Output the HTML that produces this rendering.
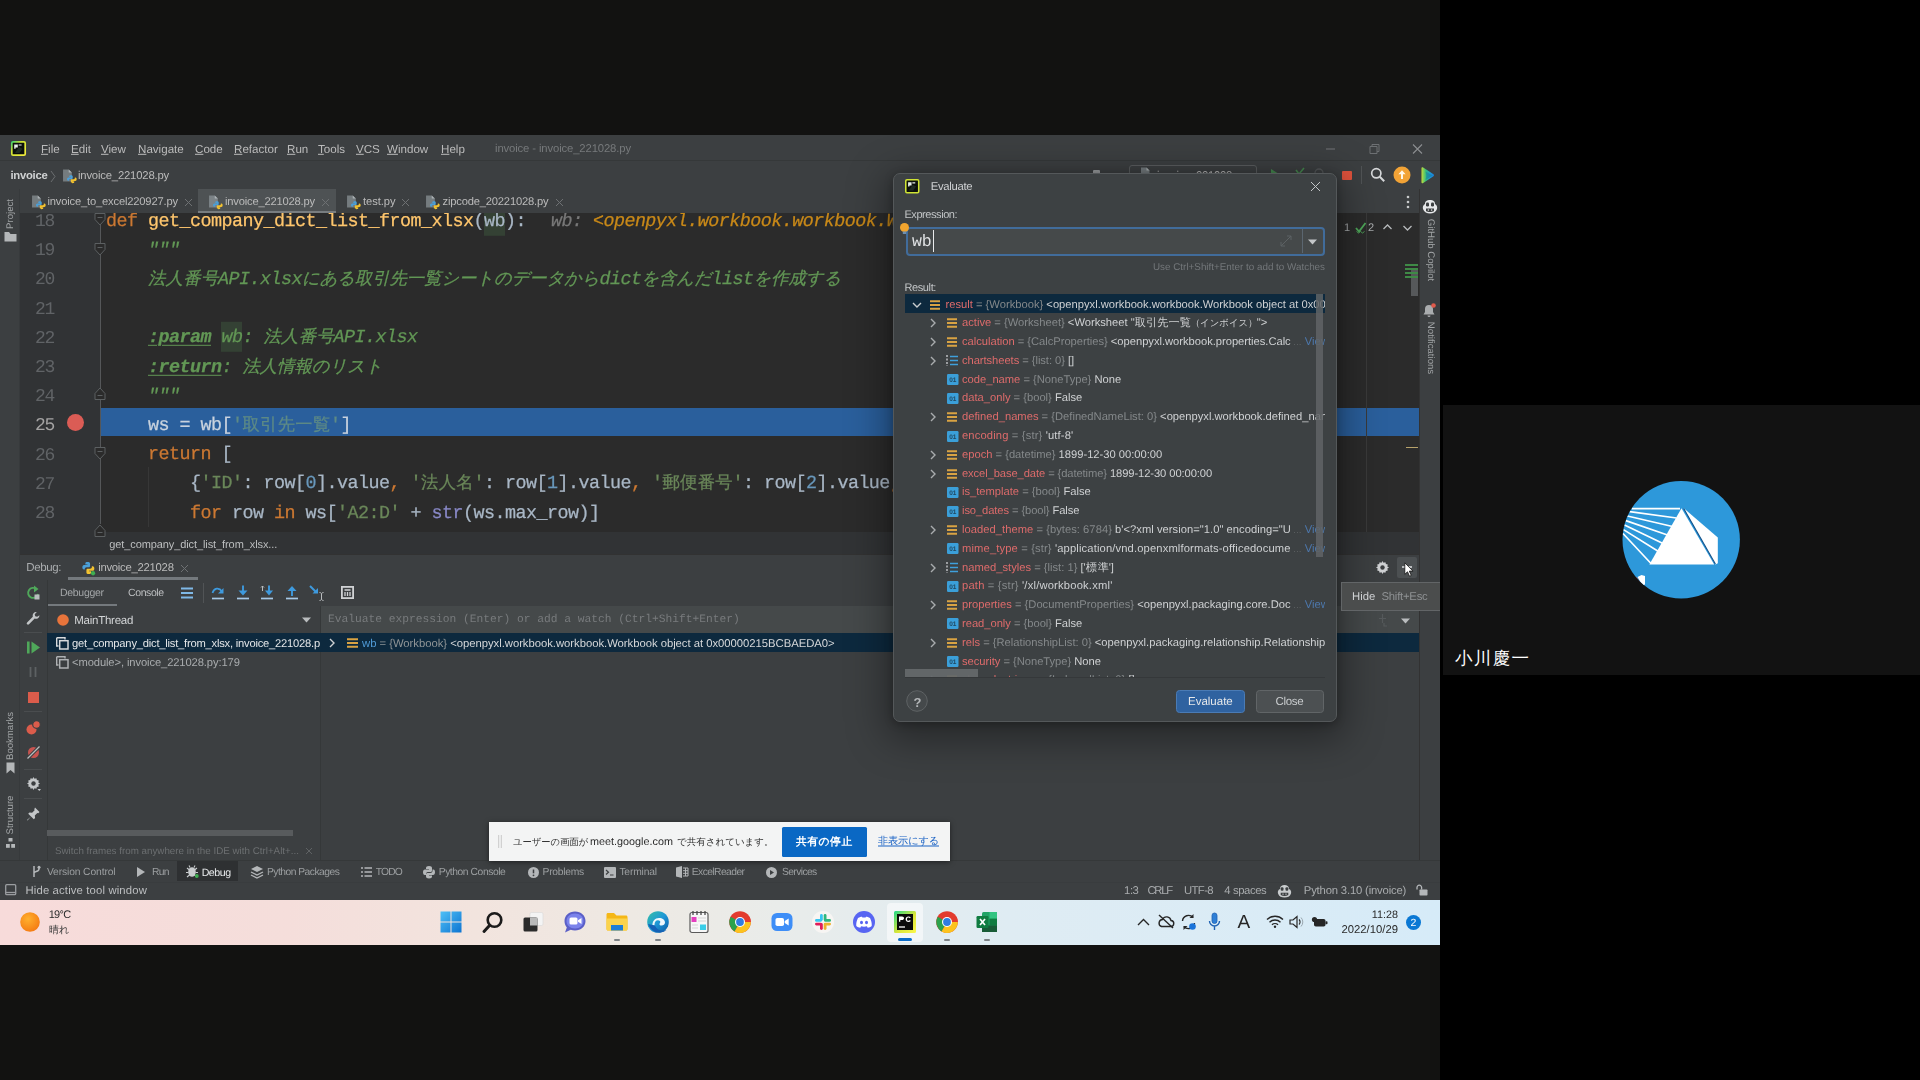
<!DOCTYPE html>
<html lang="ja">
<head>
<meta charset="utf-8">
<title>Meet screen share - PyCharm Evaluate</title>
<style>
*{box-sizing:border-box;margin:0;padding:0}
html,body{width:1920px;height:1080px;overflow:hidden;background:#000}
body{position:relative;font-family:"Liberation Sans",sans-serif;font-size:11.5px;color:#bbbbbb;-webkit-font-smoothing:antialiased;text-rendering:geometricPrecision}
.a{position:absolute;white-space:nowrap}
.t{position:absolute;white-space:nowrap;line-height:1;transform:translateY(calc(-50% + .6px))}
.mono{font-family:"Liberation Mono",monospace}
svg{position:absolute;overflow:visible}
#share{left:0;top:135px;width:1440px;height:810px;background:#3c3f41;overflow:hidden;filter:blur(.4px)}
/* IDE chrome */
#menubar{left:0;top:0;width:1440px;height:26px;background:#3c3f41;border-bottom:1px solid #353839}
#navbar{left:0;top:27px;width:1440px;height:27px;background:#3c3f41}
#tabs{left:20px;top:54px;width:1399px;height:24px;background:#3c3f41}
#lstripe{left:0;top:54px;width:20px;height:674px;background:#3c3f41;border-right:1px solid #373a3c}
#rstripe{left:1419px;top:54px;width:21px;height:674px;background:#3c3f41;border-left:1px solid #323232}
#editor{left:20px;top:78px;width:1399px;height:319px;background:#2b2b2b;overflow:hidden}
#gutter{left:0;top:0;width:80px;height:319px;background:#313335}
.ln{position:absolute;left:15px;width:20px;font-family:"Liberation Mono",monospace;font-size:18px;line-height:1;color:#606366;transform:translateY(-50%);letter-spacing:-1.3px}
.cl{position:absolute;left:86px;font-family:"Liberation Mono",monospace;font-size:18.4px;letter-spacing:-.54px;line-height:1;white-space:pre;color:#a9b7c6;transform:translateY(-50%);-webkit-text-stroke:.25px}
.cl .cj{font-size:17.3px;letter-spacing:-.2px}
.kw{color:#cc7832}.fn{color:#ffc66d}.st{color:#6a8759}.doc{color:#629755;font-style:italic}.num{color:#6897bb}.bi{color:#8888c6}
.cj{display:inline-block;white-space:nowrap;letter-spacing:-.2px;text-align:justify;text-align-last:justify}
.hl{background:#344134;padding:5px 0 4px}
.hint{font-style:italic;color:#787878}.hv{color:#c98918}
.tag{font-weight:bold;text-decoration:underline;text-decoration-thickness:1px;text-underline-offset:3px}
#crumbs{left:20px;top:397px;width:1399px;height:22px;background:#313335}
#dbghead{left:20px;top:419px;width:1399px;height:26px;background:#3c3f41;border-top:1px solid #323232}
#dbgbody{left:20px;top:445px;width:1399px;height:281px;background:#3c3f41}
#toolbar-b{left:0;top:725px;width:1440px;height:22px;background:#3c3f41;border-top:1px solid #353839}
#status{left:0;top:747px;width:1440px;height:18px;background:#3c3f41;border-top:1px solid #393c3e}
#taskbar{left:0;top:765px;width:1440px;height:45px;background:linear-gradient(90deg,#f7dbda 0%,#f5dedb 20%,#f2e4de 33%,#eee9e3 44%,#e9ecea 54%,#dfecf3 70%,#d6ebf8 100%)}
/* tile */
#tile{left:1443px;top:405px;width:477px;height:270px;background:#121212}
</style>
</head>
<body>
<div class="a" style="left:0;top:0;width:1440px;height:1080px;background:#121211"></div>
<div id="share" class="a">
  <div id="menubar" class="a"></div>
  <div id="navbar" class="a"></div>
  <div id="tabs" class="a"></div>
  <div id="lstripe" class="a"></div>
  <div id="rstripe" class="a"></div>
  <div id="editor" class="a">
    <div id="gutter" class="a"></div>
    <div class="a" style="left:80px;top:195px;width:1319px;height:28px;background:#2a5f9c"></div>
    <div class="ln" style="top:8.9px;color:#606366">18</div>
    <div class="ln" style="top:38.1px;color:#606366">19</div>
    <div class="ln" style="top:67.3px;color:#606366">20</div>
    <div class="ln" style="top:96.5px;color:#606366">21</div>
    <div class="ln" style="top:125.7px;color:#606366">22</div>
    <div class="ln" style="top:154.9px;color:#606366">23</div>
    <div class="ln" style="top:184.1px;color:#606366">24</div>
    <div class="ln" style="top:213.3px;color:#a4a3a3">25</div>
    <div class="ln" style="top:242.5px;color:#606366">26</div>
    <div class="ln" style="top:271.7px;color:#606366">27</div>
    <div class="ln" style="top:300.9px;color:#606366">28</div>
    <div class="a" style="left:47px;top:201px;width:17px;height:17px;border-radius:50%;background:#db5c55"></div>
    <div class="a" style="left:1346px;top:0;width:1px;height:319px;background:#3a3a3a"></div>
    <div class="cl" style="top:8.5px"><span class="kw">def </span><span class="fn">get_company_dict_list_from_xlsx</span>(<span class="hl">wb</span>):  <span class="hint" style="margin-left:4px">wb: <span class="hv">&lt;openpyxl.workbook.workbook.Workbook object at 0x</span></span></div>
    <div class="cl" style="top:37.7px">    <span class="doc">"""</span></div>
    <div class="cl" style="top:66.9px">    <span class="doc"><span class="cj" style="width:70px">法人番号</span>API.xlsx<span class="cj" style="width:297.5px">にある取引先一覧シートのデータから</span>dict<span class="cj" style="width:70px">を含んだ</span>list<span class="cj" style="width:87.5px">を作成する</span></span></div>
    <div class="cl" style="top:125.3px">    <span class="doc"><span class="tag">:param</span> <span class="hl">wb</span>: <span class="cj" style="width:70px">法人番号</span>API.xlsx</span></div>
    <div class="cl" style="top:154.5px">    <span class="doc"><span class="tag">:return</span>: <span class="cj" style="width:140px">法人情報のリスト</span></span></div>
    <div class="cl" style="top:183.7px">    <span class="doc">"""</span></div>
    <div class="cl" style="top:212.9px">    <span style="color:#c9d3de">ws = wb[</span><span style="color:#5d8a86">'<span class="cj" style="width:87.5px">取引先一覧</span>'</span><span style="color:#c9d3de">]</span></div>
    <div class="cl" style="top:242.1px">    <span class="kw">return </span>[</div>
    <div class="cl" style="top:271.3px">        {<span class="st">'ID'</span>: row[<span class="num">0</span>].value<span class="kw">,</span> <span class="st">'<span class="cj" style="width:52.5px">法人名</span>'</span>: row[<span class="num">1</span>].value<span class="kw">,</span> <span class="st">'<span class="cj" style="width:70px">郵便番号</span>'</span>: row[<span class="num">2</span>].value<span class="kw">,</span> <span class="st">'<span class="cj" style="width:35px">住所</span>'</span>: row[<span class="num">3</span>].value}</div>
    <div class="cl" style="top:300.5px">        <span class="kw">for </span>row <span class="kw">in </span>ws[<span class="st">'A2:D'</span> + <span class="bi">str</span>(ws.max_row)]</div>
    <div class="cl" style="top:329.7px">    ]</div>
    <!--EDITOR2-->
  </div>
  <div id="crumbs" class="a"></div>
  <div id="dbghead" class="a"></div>
  <div id="dbgbody" class="a"></div>
  <div id="toolbar-b" class="a"></div>
  <div id="status" class="a"></div>
  <div id="taskbar" class="a"></div>
  <svg style="left:11px;top:6px;" width="15" height="15" viewBox="0 0 15 15"><defs><linearGradient id="pcb" x1="0" y1="0" x2="1" y2="1"><stop offset="0" stop-color="#3fd56f"/><stop offset=".35" stop-color="#cfe334"/><stop offset="1" stop-color="#f3ec3c"/></linearGradient></defs><rect x=".8" y=".8" width="13.4" height="13.4" rx="1.2" fill="#0b0f0c" stroke="url(#pcb)" stroke-width="1.700"/><path d="M3.2 3.4h3.6v3.2H4.6v1.2H3.2z M7.6 3.4h3v1.2h-3z" fill="#e9f0ea"/><path d="M8 6l3.5 1.8L8.500 12H4z" fill="#1f2a22"/></svg>
<div class="t" style="left:41px;top:13.5px;color:#bbbbbb;font-size:11.6px;"><u>F</u>ile</div>
<div class="t" style="left:71px;top:13.5px;color:#bbbbbb;font-size:11.6px;"><u>E</u>dit</div>
<div class="t" style="left:101px;top:13.5px;color:#bbbbbb;font-size:11.6px;"><u>V</u>iew</div>
<div class="t" style="left:138px;top:13.5px;color:#bbbbbb;font-size:11.6px;"><u>N</u>avigate</div>
<div class="t" style="left:195px;top:13.5px;color:#bbbbbb;font-size:11.6px;"><u>C</u>ode</div>
<div class="t" style="left:234px;top:13.5px;color:#bbbbbb;font-size:11.6px;"><u>R</u>efactor</div>
<div class="t" style="left:287px;top:13.5px;color:#bbbbbb;font-size:11.6px;"><u>R</u>un</div>
<div class="t" style="left:318px;top:13.5px;color:#bbbbbb;font-size:11.6px;"><u>T</u>ools</div>
<div class="t" style="left:356px;top:13.5px;color:#bbbbbb;font-size:11.6px;"><u>V</u>CS</div>
<div class="t" style="left:387px;top:13.5px;color:#bbbbbb;font-size:11.6px;"><u>W</u>indow</div>
<div class="t" style="left:441px;top:13.5px;color:#bbbbbb;font-size:11.6px;"><u>H</u>elp</div>
<div class="t" style="left:495px;top:13.5px;color:#76797b;font-size:11.3px;letter-spacing:-0.128px;">invoice - invoice_221028.py</div>
<svg style="left:1324px;top:7px;" width="100" height="14" viewBox="0 0 100 14"><path d="M2 7h9" stroke="#6d7073" stroke-width="1.1"/><path d="M46 4.500h7v7h-7z M48 4.500v-2h7v7h-2" fill="none" stroke="#6d7073" stroke-width="1"/><path d="M89 2.500l9 9m0-9l-9 9" stroke="#8b8e90" stroke-width="1.1"/></svg>
<div class="t" style="left:10.5px;top:41.3px;color:#d0d2d3;font-size:11.3px;font-weight:bold;letter-spacing:-0.277px;">invoice</div>
<svg style="left:50px;top:35px;" width="6" height="13" viewBox="0 0 6 13"><path d="M1 1l4 5.500-4 5.500" fill="none" stroke="#6b6e70" stroke-width="1"/></svg>
<svg style="left:62px;top:33.5px;" width="14.5" height="16.053571428571427" viewBox="0 0 14 15.500"><path d="M1 .5h5.500l3 3V12H1z" fill="#9aa1a6" opacity=".62"/><path d="M6.500 .5v3h3z" fill="#c5cacd" opacity=".7"/><g transform="translate(3.200 4.600) scale(.76)"><path d="M5 3.200c0-1 .8-1.400 2.200-1.400s2.200.500 2.200 1.400v2.300c0 .8-.6 1.200-1.300 1.200H6.200c-1 0-1.700.700-1.700 1.600v.600H3.700c-1 0-1.500-.900-1.500-2.100s.600-2.200 1.600-2.200H7v-.500H5z" fill="#4a9fd8"/><path d="M11.400 10.600c0 1-.8 1.500-2.200 1.500S7 11.600 7 10.600V8.300c0-.8.600-1.200 1.300-1.200h2.100c1 0 1.700-.700 1.700-1.600v-.700h.8c1 0 1.500.900 1.500 2.100s-.6 2.200-1.600 2.200H9.400v.500h2z" fill="#f2c230"/></g></svg>
<div class="t" style="left:78px;top:41.3px;color:#bbbbbb;font-size:11.3px;letter-spacing:-0.191px;">invoice_221028.py</div>
<div class="a" style="left:1129px;top:30px;width:128px;height:20px;background:transparent;border:1px solid #5a5d5f;border-radius:3px;"></div>
<div class="a" style="left:1093px;top:35px;width:7px;height:6px;background:#9a9da0;border-radius:1px;"></div>
<svg style="left:1140px;top:32px;" width="14" height="15.5" viewBox="0 0 14 15.500"><path d="M1 .5h5.500l3 3V12H1z" fill="#9aa1a6" opacity=".62"/><path d="M6.500 .5v3h3z" fill="#c5cacd" opacity=".7"/><g transform="translate(3.200 4.600) scale(.76)"><path d="M5 3.200c0-1 .8-1.400 2.200-1.400s2.200.500 2.200 1.400v2.300c0 .8-.6 1.200-1.300 1.200H6.200c-1 0-1.700.700-1.700 1.600v.600H3.700c-1 0-1.500-.900-1.500-2.100s.600-2.200 1.600-2.200H7v-.500H5z" fill="#4a9fd8"/><path d="M11.400 10.600c0 1-.8 1.500-2.200 1.500S7 11.600 7 10.600V8.300c0-.8.600-1.200 1.300-1.200h2.100c1 0 1.700-.700 1.700-1.600v-.700h.8c1 0 1.500.900 1.500 2.100s-.6 2.200-1.600 2.200H9.400v.500h2z" fill="#f2c230"/></g></svg>
<div class="t" style="left:1157px;top:40.5px;color:#bbbbbb;font-size:11.3px;letter-spacing:-0.298px;">invoice_221028</div>
<svg style="left:1268px;top:32px;opacity:.8;" width="60" height="10" viewBox="0 0 60 10"><path d="M3 2l8 5-8 5z" fill="#499c54"/><path d="M28 3l3 4 5-6" stroke="#499c54" stroke-width="1.600" fill="none"/><circle cx="51" cy="6" r="4" fill="none" stroke="#5b5e60" stroke-width="1.300"/></svg>
<div class="a" style="left:1341.8px;top:35.5px;width:10.2px;height:9.8px;background:#e0533d;border-radius:1px;"></div>
<div class="a" style="left:1361px;top:31px;width:1px;height:18px;background:#515456;"></div>
<svg style="left:1370px;top:32px;" width="16" height="16" viewBox="0 0 16 16"><circle cx="6.300" cy="6.300" r="4.600" fill="none" stroke="#d6d8da" stroke-width="1.700"/><path d="M9.800 9.800l4.400 4.400" stroke="#d6d8da" stroke-width="2"/></svg>
<svg style="left:1393px;top:31px;" width="18" height="18" viewBox="0 0 18 18"><circle cx="9" cy="9" r="8.500" fill="#f2a336"/><path d="M9 4.200l3.600 4H10v4.800H8V8.200H5.400z" fill="#fff7e8"/></svg>
<svg style="left:1419px;top:31.5px;" width="16" height="17" viewBox="0 0 16 17"><defs><linearGradient id="tg" x1="0" y1="0" x2="1" y2="0"><stop offset="0" stop-color="#c3dc3a"/><stop offset=".35" stop-color="#35bf7c"/><stop offset=".75" stop-color="#1b93dd"/><stop offset="1" stop-color="#1c7fd6"/></linearGradient></defs><path d="M2.500 1.200c0-.9.900-1.300 1.700-.8l10.300 6.900c.7.500.7 1.400 0 1.900L4.200 16.100c-.8.500-1.700.100-1.700-.8z" fill="url(#tg)"/><path d="M6.500 4.500l7 4-7 4.500c1-3 1-5.500 0-8.500z" fill="#157a9e" opacity=".55"/></svg>
<div class="a" style="left:198px;top:54px;width:138px;height:24px;background:#4e5254;"></div>
<div class="a" style="left:198px;top:75.5px;width:138px;height:2.5px;background:#787d80;"></div>
<svg style="left:31px;top:59.5px;" width="14.5" height="16.053571428571427" viewBox="0 0 14 15.500"><path d="M1 .5h5.500l3 3V12H1z" fill="#9aa1a6" opacity=".62"/><path d="M6.500 .5v3h3z" fill="#c5cacd" opacity=".7"/><g transform="translate(3.200 4.600) scale(.76)"><path d="M5 3.200c0-1 .8-1.400 2.200-1.400s2.200.500 2.200 1.400v2.300c0 .8-.6 1.200-1.300 1.200H6.200c-1 0-1.700.700-1.700 1.600v.600H3.700c-1 0-1.500-.900-1.500-2.100s.600-2.200 1.600-2.200H7v-.500H5z" fill="#4a9fd8"/><path d="M11.400 10.600c0 1-.8 1.500-2.200 1.500S7 11.600 7 10.600V8.300c0-.8.600-1.200 1.300-1.200h2.100c1 0 1.700-.700 1.700-1.600v-.700h.8c1 0 1.500.900 1.500 2.100s-.6 2.200-1.600 2.200H9.400v.500h2z" fill="#f2c230"/></g></svg>
<div class="t" style="left:47.5px;top:67.4px;color:#bbbbbb;font-size:11.2px;letter-spacing:-0.185px;">invoice_to_excel220927.py</div>
<svg style="left:184.5px;top:63.8px;" width="7" height="7" viewBox="0 0 7 7"><path d="M0 0l7 7M7 0l-7 7" stroke="#6e7173" stroke-width="1"/></svg>
<svg style="left:208px;top:59.5px;" width="14.5" height="16.053571428571427" viewBox="0 0 14 15.500"><path d="M1 .5h5.500l3 3V12H1z" fill="#9aa1a6" opacity=".62"/><path d="M6.500 .5v3h3z" fill="#c5cacd" opacity=".7"/><g transform="translate(3.200 4.600) scale(.76)"><path d="M5 3.200c0-1 .8-1.400 2.200-1.400s2.200.500 2.200 1.400v2.300c0 .8-.6 1.200-1.300 1.200H6.200c-1 0-1.700.700-1.700 1.600v.600H3.700c-1 0-1.500-.900-1.500-2.100s.600-2.200 1.600-2.200H7v-.500H5z" fill="#4a9fd8"/><path d="M11.400 10.600c0 1-.8 1.500-2.200 1.500S7 11.600 7 10.600V8.300c0-.8.600-1.200 1.300-1.200h2.100c1 0 1.700-.700 1.700-1.600v-.700h.8c1 0 1.500.900 1.500 2.100s-.6 2.200-1.600 2.200H9.400v.500h2z" fill="#f2c230"/></g></svg>
<div class="t" style="left:225px;top:67.4px;color:#bbbbbb;font-size:11.2px;letter-spacing:-0.201px;">invoice_221028.py</div>
<svg style="left:322.0px;top:63.8px;" width="7" height="7" viewBox="0 0 7 7"><path d="M0 0l7 7M7 0l-7 7" stroke="#6e7173" stroke-width="1"/></svg>
<svg style="left:346px;top:59.5px;" width="14.5" height="16.053571428571427" viewBox="0 0 14 15.500"><path d="M1 .5h5.500l3 3V12H1z" fill="#9aa1a6" opacity=".62"/><path d="M6.500 .5v3h3z" fill="#c5cacd" opacity=".7"/><g transform="translate(3.200 4.600) scale(.76)"><path d="M5 3.200c0-1 .8-1.400 2.200-1.400s2.200.500 2.200 1.400v2.300c0 .8-.6 1.200-1.300 1.200H6.200c-1 0-1.700.700-1.700 1.600v.600H3.700c-1 0-1.500-.900-1.500-2.100s.600-2.200 1.600-2.200H7v-.500H5z" fill="#4a9fd8"/><path d="M11.400 10.600c0 1-.8 1.500-2.200 1.500S7 11.600 7 10.600V8.300c0-.8.600-1.200 1.300-1.200h2.100c1 0 1.700-.700 1.700-1.600v-.700h.8c1 0 1.500.900 1.500 2.100s-.6 2.200-1.600 2.200H9.400v.500h2z" fill="#f2c230"/></g></svg>
<div class="t" style="left:363px;top:67.4px;color:#bbbbbb;font-size:11.2px;letter-spacing:-0.070px;">test.py</div>
<svg style="left:402.0px;top:63.8px;" width="7" height="7" viewBox="0 0 7 7"><path d="M0 0l7 7M7 0l-7 7" stroke="#6e7173" stroke-width="1"/></svg>
<svg style="left:425px;top:59.5px;" width="14.5" height="16.053571428571427" viewBox="0 0 14 15.500"><path d="M1 .5h5.500l3 3V12H1z" fill="#9aa1a6" opacity=".62"/><path d="M6.500 .5v3h3z" fill="#c5cacd" opacity=".7"/><g transform="translate(3.200 4.600) scale(.76)"><path d="M5 3.200c0-1 .8-1.400 2.200-1.400s2.200.500 2.200 1.400v2.300c0 .8-.6 1.200-1.300 1.200H6.200c-1 0-1.700.700-1.700 1.600v.600H3.700c-1 0-1.500-.900-1.500-2.100s.600-2.200 1.600-2.200H7v-.500H5z" fill="#4a9fd8"/><path d="M11.400 10.600c0 1-.8 1.500-2.200 1.500S7 11.600 7 10.600V8.300c0-.8.600-1.200 1.300-1.200h2.100c1 0 1.700-.700 1.700-1.600v-.700h.8c1 0 1.500.900 1.500 2.100s-.6 2.200-1.600 2.200H9.400v.500h2z" fill="#f2c230"/></g></svg>
<div class="t" style="left:442.5px;top:67.4px;color:#bbbbbb;font-size:11.2px;letter-spacing:-0.190px;">zipcode_20221028.py</div>
<svg style="left:556.0px;top:63.8px;" width="7" height="7" viewBox="0 0 7 7"><path d="M0 0l7 7M7 0l-7 7" stroke="#6e7173" stroke-width="1"/></svg>
<svg style="left:1406px;top:60px;" width="4" height="14" viewBox="0 0 4 14"><circle cx="2" cy="2" r="1.300" fill="#c8cacc"/><circle cx="2" cy="7" r="1.300" fill="#c8cacc"/><circle cx="2" cy="12" r="1.300" fill="#c8cacc"/></svg>
<div class="a" style="left:10.5px;top:78.5px;width:0;height:0"><div style="position:absolute;white-space:nowrap;line-height:1;font-size:9.6px;color:#a2a5a7;transform:translate(-50%,-50%) rotate(-90deg)">Project</div></div>
<svg style="left:4px;top:96px;" width="13" height="11" viewBox="0 0 13 11"><path d="M.5 1h4.500l1.500 2h6v7.500H.5z" fill="#b4b7b9"/></svg>
<div class="a" style="left:10.5px;top:601px;width:0;height:0"><div style="position:absolute;white-space:nowrap;line-height:1;font-size:9.6px;color:#a2a5a7;transform:translate(-50%,-50%) rotate(-90deg)">Bookmarks</div></div>
<svg style="left:6px;top:627px;" width="9" height="12" viewBox="0 0 9 12"><path d="M.5.5h8v11l-4-3.500-4 3.500z" fill="#b4b7b9"/></svg>
<div class="a" style="left:10.5px;top:680px;width:0;height:0"><div style="position:absolute;white-space:nowrap;line-height:1;font-size:9.6px;color:#a2a5a7;transform:translate(-50%,-50%) rotate(-90deg)">Structure</div></div>
<svg style="left:6px;top:703px;" width="9" height="10" viewBox="0 0 9 10"><rect x="2.500" y="0" width="4" height="3.500" fill="#b4b7b9"/><rect x="0" y="6" width="3.800" height="3.800" fill="#b4b7b9"/><rect x="5.200" y="6" width="3.800" height="3.800" fill="#b4b7b9"/></svg>
<svg style="left:1421.5px;top:64px;" width="16" height="15" viewBox="0 0 16 15"><path d="M3 5c0-3 2-4 5-4s5 1 5 4c2 1 2.500 3 2 5-1 3-4 4.500-7 4.500S2 13 1 10c-.5-2 0-4 2-5z" fill="#e6e8ea"/><rect x="4" y="3.500" width="3" height="4" rx="1.200" fill="#3c3f41"/><rect x="9" y="3.500" width="3" height="4" rx="1.200" fill="#3c3f41"/><path d="M4 9.500h8v2.500c-2 1.300-6 1.300-8 0z" fill="#3c3f41"/><path d="M6.300 10.300v1.500M9.700 10.300v1.500" stroke="#e6e8ea" stroke-width="1"/></svg>
<div class="a" style="left:1429.5px;top:115px;width:0;height:0"><div style="position:absolute;white-space:nowrap;line-height:1;font-size:9.6px;color:#a2a5a7;transform:translate(-50%,-50%) rotate(90deg)">GitHub Copilot</div></div>
<svg style="left:1423px;top:168px;" width="13" height="14" viewBox="0 0 13 14"><path d="M6 2a4 4 0 0 1 4 4v3l1.500 2.500h-11L2 9V6a4 4 0 0 1 4-4z M4.500 12.500h3a1.500 1.500 0 0 1-3 0z" fill="#a9acae"/><circle cx="10.500" cy="2.500" r="2.300" fill="#e05a4b"/></svg>
<div class="a" style="left:1429.5px;top:213px;width:0;height:0"><div style="position:absolute;white-space:nowrap;line-height:1;font-size:9.6px;color:#a2a5a7;transform:translate(-50%,-50%) rotate(90deg)">Notifications</div></div>
<div class="a" style="left:99.5px;top:89px;width:1px;height:300px;background:#555759;"></div>
<svg style="left:94px;top:78px;" width="12" height="13" viewBox="0 0 12 13"><path d="M1 .5h10v6L6 12 1 6.500z" fill="#2b2b2b" stroke="#5c6062" stroke-width="1"/><path d="M3.500 4.500h5" stroke="#5c6062" stroke-width="1"/></svg>
<svg style="left:94px;top:107.5px;" width="12" height="13" viewBox="0 0 12 13"><path d="M1 .5h10v6L6 12 1 6.500z" fill="#2b2b2b" stroke="#5c6062" stroke-width="1"/><path d="M3.500 4.500h5" stroke="#5c6062" stroke-width="1"/></svg>
<svg style="left:94px;top:251.5px;" width="12" height="13" viewBox="0 0 12 13"><path d="M1 12.500h10v-6L6 1 1 6.500z" fill="#2b2b2b" stroke="#5c6062" stroke-width="1"/><path d="M3.500 8.500h5" stroke="#5c6062" stroke-width="1"/></svg>
<svg style="left:94px;top:311.5px;" width="12" height="13" viewBox="0 0 12 13"><path d="M1 .5h10v6L6 12 1 6.500z" fill="#2b2b2b" stroke="#5c6062" stroke-width="1"/><path d="M3.500 4.500h5" stroke="#5c6062" stroke-width="1"/></svg>
<svg style="left:94px;top:389px;" width="12" height="13" viewBox="0 0 12 13"><path d="M1 12.500h10v-6L6 1 1 6.500z" fill="#2b2b2b" stroke="#5c6062" stroke-width="1"/><path d="M3.500 8.500h5" stroke="#5c6062" stroke-width="1"/></svg>
<div class="a" style="left:148px;top:332px;width:1px;height:60px;background:#373737;"></div>
<div class="t" style="left:1344px;top:92.5px;color:#a7aaac;font-size:11px;">1</div>
<svg style="left:1354px;top:86px;" width="14" height="13" viewBox="0 0 14 13"><path d="M2 7l3 3.500 6.500-8.500" stroke="#4fa85a" stroke-width="1.800" fill="none"/><path d="M2.500 10.500l2 1.500 2-1.500 2 1.500 2-1.500" stroke="#4fa85a" stroke-width=".9" fill="none"/></svg>
<div class="t" style="left:1368px;top:92.5px;color:#a7aaac;font-size:11px;">2</div>
<svg style="left:1383px;top:89px;" width="9" height="6" viewBox="0 0 9 6"><path d="M.5 5l4-4 4 4" stroke="#b8bbbd" stroke-width="1.300" fill="none"/></svg>
<svg style="left:1403px;top:90px;" width="9" height="6" viewBox="0 0 9 6"><path d="M.5 1l4 4 4-4" stroke="#b8bbbd" stroke-width="1.300" fill="none"/></svg>
<div class="a" style="left:1411px;top:133px;width:7px;height:28px;background:#5b5d5f;opacity:.9;"></div>
<div class="a" style="left:1405px;top:129px;width:13px;height:1.5px;background:#3f8a46;"></div>
<div class="a" style="left:1405px;top:133px;width:13px;height:1.5px;background:#3f8a46;"></div>
<div class="a" style="left:1405px;top:137px;width:13px;height:1.5px;background:#3f8a46;"></div>
<div class="a" style="left:1405px;top:141px;width:13px;height:1.5px;background:#3f8a46;"></div>
<div class="a" style="left:1406px;top:311.5px;width:12px;height:1.5px;background:#b7a26b;"></div>
<div class="t" style="left:109.2px;top:409.8px;color:#bdbfc0;font-size:11px;letter-spacing:-0.094px;">get_company_dict_list_from_xlsx...</div>
<div class="t" style="left:26.2px;top:433.4px;color:#a9acae;font-size:11.5px;letter-spacing:-0.347px;">Debug:</div>
<svg style="left:79.5px;top:425.3px;" width="15.5" height="15.5" viewBox="0 0 14.500 14.500"><path d="M5 3.200c0-1 .8-1.400 2.200-1.400s2.200.500 2.200 1.400v2.300c0 .8-.6 1.200-1.300 1.200H6.200c-1 0-1.700.700-1.700 1.600v.600H3.700c-1 0-1.500-.900-1.500-2.100s.600-2.200 1.600-2.200H7v-.500H5z" fill="#4a9fd8"/><path d="M10.400 11.600c0 1-.8 1.500-2.200 1.500S6 12.600 6 11.600V9.300c0-.8.600-1.200 1.300-1.200h2.100c1 0 1.700-.700 1.700-1.600v-.700h.8c1 0 1.500.900 1.500 2.100s-.6 2.200-1.600 2.200H8.400v.500h2z" fill="#f2c230"/><circle cx="12.200" cy="12.400" r="2" fill="#3fae52"/></svg>
<div class="t" style="left:98.2px;top:433.4px;color:#bbbbbb;font-size:11.3px;letter-spacing:-0.262px;">invoice_221028</div>
<svg style="left:180.5px;top:429.8px;" width="7" height="7" viewBox="0 0 7 7"><path d="M0 0l7 7M7 0l-7 7" stroke="#6e7173" stroke-width="1"/></svg>
<div class="a" style="left:68px;top:442px;width:130px;height:2.5px;background:#74797d;"></div>
<svg style="left:1376px;top:426px;" width="13" height="13" viewBox="0 0 13 13"><path d="M6.500 0l1 1.700 1.900-.500.500 1.900 1.900.500-.500 1.900 1.700 1-1.700 1 .5 1.900-1.900.500-.500 1.900-1.900-.500-1 1.700-1-1.700-1.900.500-.500-1.900-1.900-.500.500-1.900L0 6.500l1.700-1-.500-1.900 1.900-.500.500-1.900 1.900.500z" fill="#cfd1d3"/><circle cx="6.500" cy="6.500" r="2.200" fill="#3c3f41"/></svg>
<div class="a" style="left:1397px;top:422px;width:20px;height:21px;background:#4c5052;border-radius:2px;"></div>
<div class="a" style="left:1402px;top:431px;width:10px;height:1.8px;background:#b9bcbe;"></div>
<svg style="left:1404px;top:427px;" width="10" height="16" viewBox="0 0 10 16"><path d="M.8.800v11.500l2.700-2.500 2 4.400 1.800-.800-2-4.300h3.700z" fill="#fff" stroke="#111" stroke-width=".8"/></svg>
<svg style="left:26px;top:450px;" width="14" height="15" viewBox="0 0 14 15"><path d="M10.500 4.200A5 5 0 1 0 12 9" fill="none" stroke="#4fa85a" stroke-width="1.900"/><path d="M8 .5l4.500 3.500L8 7.500z" fill="#4fa85a"/><rect x="8.500" y="9.500" width="5" height="5" fill="#b9bcbe"/></svg>
<div class="t" style="left:60px;top:458.4px;color:#a4a7a9;font-size:10.5px;letter-spacing:-0.296px;">Debugger</div>
<div class="t" style="left:128px;top:458.4px;color:#bdbfc1;font-size:10.5px;letter-spacing:-0.396px;">Console</div>
<div class="a" style="left:48px;top:468.5px;width:69px;height:2.5px;background:#74797d;"></div>
<svg style="left:181px;top:451.5px;" width="12" height="12" viewBox="0 0 12 12"><path d="M0 1.500h12M0 6h12M0 10.500h12" stroke="#7fb8e6" stroke-width="2"/></svg>
<div class="a" style="left:203px;top:448px;width:1px;height:20px;background:#515456;"></div>
<svg style="left:210.5px;top:450px;" width="14" height="15" viewBox="0 0 14 15"><path d="M1.500 8C3 3 8 2 11 6.500" fill="none" stroke="#3e9ade" stroke-width="1.700"/><path d="M12.500 3v5.500H7z" fill="#3e9ade"/><path d="M1 13.500h12" stroke="#a7c8e6" stroke-width="1.700"/></svg>
<svg style="left:235.5px;top:450px;" width="14" height="15" viewBox="0 0 14 15"><path d="M7 .5v6" stroke="#3e9ade" stroke-width="1.900"/><path d="M2.500 5.500h9L7 10.500z" fill="#3e9ade"/><path d="M1 13.500h12" stroke="#a7c8e6" stroke-width="1.700"/></svg>
<svg style="left:259.5px;top:450px;" width="14" height="15" viewBox="0 0 14 15"><path d="M9 .5v6" stroke="#3e9ade" stroke-width="1.900"/><path d="M5 5.500h8L9 10.500z" fill="#3e9ade"/><path d="M1 13.500h12" stroke="#a7c8e6" stroke-width="1.700"/><path d="M2.500 1v5M1 2.500L2.500 1 4 2.500" stroke="#b9bcbe" stroke-width="1" fill="none"/></svg>
<svg style="left:284.5px;top:450px;" width="14" height="15" viewBox="0 0 14 15"><path d="M7 5v6" stroke="#3e9ade" stroke-width="1.900"/><path d="M2.500 6h9L7 1z" fill="#3e9ade"/><path d="M1 13.500h12" stroke="#a7c8e6" stroke-width="1.700"/></svg>
<svg style="left:308.5px;top:450px;" width="17" height="16" viewBox="0 0 17 16"><path d="M1 1l6 6" stroke="#3e9ade" stroke-width="1.900"/><path d="M3.500 8.500H9V3z" fill="#3e9ade"/><path d="M10.500 7.500c1 0 1.500.500 2 1 .5-.500 1-1 2-1M10.500 15.500c1 0 1.500-.500 2-1 .5.500 1 1 2 1M12.500 8.500v6" stroke="#b9bcbe" stroke-width="1" fill="none"/></svg>
<svg style="left:341px;top:451px;" width="13" height="13" viewBox="0 0 13 13"><rect x=".9" y=".9" width="11.200" height="11.200" fill="none" stroke="#d0d2d4" stroke-width="1.800"/><path d="M3.500 4h6M4 6v4M6.500 6v4M9 6v4" stroke="#d0d2d4" stroke-width="1.300"/></svg>
<div class="a" style="left:46.5px;top:445px;width:1px;height:280px;background:#353839;"></div>
<svg style="left:26px;top:476px;" width="15" height="15" viewBox="0 0 15 15"><path d="M13.500 4.200a3.600 3.600 0 0 1-4.800 3.400L3 13.300a1.300 1.300 0 0 1-1.900-1.900l5.700-5.700A3.600 3.600 0 0 1 10.800 1L8.700 3.200l.5 2 2 .5z" fill="#c3c6c8"/></svg>
<div class="a" style="left:24px;top:497px;width:18px;height:1px;background:#4a4d4f;"></div>
<svg style="left:27px;top:506px;" width="14" height="13" viewBox="0 0 14 13"><rect x="0" y=".5" width="2.600" height="12" fill="#4fa85a"/><path d="M4.500.5l8.500 6-8.500 6z" fill="#4fa85a"/></svg>
<svg style="left:29px;top:532px;" width="8" height="10" viewBox="0 0 8 10"><path d="M1.500 0v10M6.500 0v10" stroke="#5d6163" stroke-width="1.800"/></svg>
<div class="a" style="left:27.5px;top:556.5px;width:11px;height:11px;background:#db5c4b;"></div>
<div class="a" style="left:24px;top:576px;width:18px;height:1px;background:#4a4d4f;"></div>
<svg style="left:26px;top:585px;" width="15" height="15" viewBox="0 0 15 15"><circle cx="5.500" cy="9.500" r="5" fill="#db5c4b"/><circle cx="10.500" cy="4.500" r="3.800" fill="#db5c4b" stroke="#3c3f41" stroke-width="1.200"/></svg>
<svg style="left:26px;top:610px;" width="15" height="15" viewBox="0 0 15 15"><circle cx="7.500" cy="7.500" r="5.500" fill="#c75450"/><path d="M1 14L14 1" stroke="#3c3f41" stroke-width="3.200"/><path d="M1.500 13.500L13.500 1.500" stroke="#b9bcbe" stroke-width="1.300"/></svg>
<div class="a" style="left:24px;top:634px;width:18px;height:1px;background:#4a4d4f;"></div>
<svg style="left:27px;top:642px;" width="14" height="14" viewBox="0 0 14 14"><path d="M6.500 0l1 1.700 1.900-.500.500 1.900 1.900.500-.500 1.900 1.700 1-1.700 1 .5 1.900-1.900.500-.500 1.900-1.900-.500-1 1.700-1-1.700-1.900.500-.500-1.900-1.900-.500.500-1.900L0 6.500l1.700-1-.500-1.900 1.900-.500.500-1.900 1.900.500z" fill="#c3c6c8"/><circle cx="6.500" cy="6.500" r="2.200" fill="#3c3f41"/><path d="M10.500 12h3.500l-1.700 2z" fill="#c3c6c8"/></svg>
<div class="a" style="left:24px;top:663px;width:18px;height:1px;background:#4a4d4f;"></div>
<svg style="left:27px;top:672px;" width="13" height="14" viewBox="0 0 13 14"><path d="M8 .5l4.500 4.500-1.200 1.200-1-.3-2.500 2.500.3 2.600-1.300 1.300L4 9.500.5 13.500 0 13l4-3.500L1.200 6.700l1.300-1.300 2.600.3 2.500-2.500-.3-1z" fill="#c3c6c8"/></svg>
<svg style="left:56.5px;top:479.3px;" width="12" height="12" viewBox="0 0 12 12"><circle cx="6" cy="6" r="5.800" fill="#e8743b"/></svg>
<div class="t" style="left:74.2px;top:485.6px;color:#d2d4d6;font-size:11.5px;letter-spacing:-0.237px;">MainThread</div>
<svg style="left:302px;top:482px;" width="9" height="6" viewBox="0 0 9 6"><path d="M0 .5h9L4.500 5.500z" fill="#b9bcbe"/></svg>
<div class="a" style="left:321px;top:471px;width:1098px;height:26.5px;background:#45494a;"></div>
<div class="t mono" style="left:328px;top:485.3px;color:#787b7d;font-size:11.25px;">Evaluate expression (Enter) or add a watch (Ctrl+Shift+Enter)</div>
<svg style="left:1377px;top:479px;" width="11" height="12" viewBox="0 0 11 12"><path d="M5.500 0v9M2 4.500h7M7 9v3h3" stroke="#565a5c" stroke-width="1.200" fill="none"/></svg>
<svg style="left:1401px;top:482.5px;" width="9" height="6" viewBox="0 0 9 6"><path d="M0 .5h9L4.500 5.500z" fill="#b9bcbe"/></svg>
<div class="a" style="left:320px;top:471px;width:1px;height:254px;background:#353839;"></div>
<div class="a" style="left:47px;top:498px;width:1372px;height:19px;background:#0d293e;"></div>
<svg style="left:56px;top:501.5px;" width="13" height="13" viewBox="0 0 13 13"><path d="M.7.700h8.300v1.800M.7.700v8.300h1.800" fill="none" stroke="#d8dadc" stroke-width="1.400"/><rect x="3.700" y="3.700" width="8.300" height="8.300" fill="none" stroke="#d8dadc" stroke-width="1.500"/></svg>
<div class="t" style="left:72px;top:508.5px;width:248px;overflow:hidden;color:#e4e6e8;font-size:11.200px;letter-spacing:-.22px">get_company_dict_list_from_xlsx, invoice_221028.py:25</div>
<svg style="left:56px;top:520.5px;" width="13" height="13" viewBox="0 0 13 13"><path d="M.7.700h8.300v1.800M.7.700v8.300h1.800" fill="none" stroke="#aeb1b3" stroke-width="1.400"/><rect x="3.700" y="3.700" width="8.300" height="8.300" fill="none" stroke="#aeb1b3" stroke-width="1.500"/></svg>
<div class="t" style="left:72px;top:527.5px;color:#a9acae;font-size:11.2px;letter-spacing:-0.105px;">&lt;module&gt;, invoice_221028.py:179</div>
<svg style="left:328.5px;top:503px;" width="6" height="10" viewBox="0 0 6 10"><path d="M1 1l4 4-4 4" fill="none" stroke="#cfd1d3" stroke-width="1.400"/></svg>
<svg style="left:346.5px;top:503px;" width="11" height="10" viewBox="0 0 11 10"><path d="M0 1.200h11M0 5h11M0 8.800h11" stroke="#d9a343" stroke-width="2"/></svg>
<div class="t" style="left:362px;top:508.5px;color:#d5d7d9;font-size:11.3px;letter-spacing:-0.033px;"><span style="color:#4f9ad6">wb</span><span style="color:#8f9496"> = {Workbook} </span>&lt;openpyxl.workbook.workbook.Workbook object at 0x00000215BCBAEDA0&gt;</div>
<div class="a" style="left:47px;top:695px;width:246px;height:6px;background:#585b5d;border-radius:0;"></div>
<div class="t" style="left:55px;top:715.5px;color:#6c6f71;font-size:9.8px;">Switch frames from anywhere in the IDE with Ctrl+Alt+...</div>
<svg style="left:306.0px;top:712.5px;" width="6" height="6" viewBox="0 0 6 6"><path d="M0 0l6 6M6 0l-6 6" stroke="#5f6264" stroke-width="1"/></svg>
<div class="a" style="left:177px;top:726px;width:61px;height:20px;background:#2e3032;"></div>
<svg style="left:32px;top:730px;" width="9" height="13" viewBox="0 0 9 13"><path d="M2 1v11M2 8c0-2 5-1 5-4V3" fill="none" stroke="#b4b7b9" stroke-width="1.500"/><circle cx="7" cy="2.200" r="1.500" fill="#b4b7b9"/></svg>
<div class="t" style="left:46.9px;top:738.1px;color:#9c9fa1;font-size:10.3px;letter-spacing:-0.122px;">Version Control</div>
<svg style="left:137px;top:732px;" width="8" height="10" viewBox="0 0 8 10"><path d="M0 0l8 5-8 5z" fill="#b4b7b9"/></svg>
<div class="t" style="left:151.9px;top:738.1px;color:#9c9fa1;font-size:10.3px;letter-spacing:-0.699px;">Run</div>
<svg style="left:186px;top:730px;" width="13" height="13" viewBox="0 0 13 13"><ellipse cx="6" cy="7" rx="3.800" ry="4.800" fill="#c9ccce"/><path d="M1 3l2.500 2M11 3L8.500 5M0 7.500h2.500M9.500 7.500H12M1 12l2.500-2M11 12L8.500 10M4 2.500L3 .5M8 2.500L9 .5" stroke="#c9ccce" stroke-width="1.100"/><circle cx="10.800" cy="11" r="1.900" fill="#3fae52"/></svg>
<div class="t" style="left:201.7px;top:738.1px;color:#e8eaec;font-size:10.6px;letter-spacing:-0.467px;">Debug</div>
<svg style="left:251px;top:730.5px;" width="12" height="13" viewBox="0 0 12 13"><path d="M6 0l6 3-6 3-6-3z" fill="#b4b7b9"/><path d="M0 6l6 3 6-3M0 9l6 3 6-3" fill="none" stroke="#b4b7b9" stroke-width="1.300"/></svg>
<div class="t" style="left:267px;top:738.1px;color:#9c9fa1;font-size:10.3px;letter-spacing:-0.524px;">Python Packages</div>
<svg style="left:361px;top:732px;" width="11" height="10" viewBox="0 0 11 10"><path d="M0 1h2M3.500 1H11M0 5h2M3.500 5H11M0 9h2M3.500 9H11" stroke="#b4b7b9" stroke-width="1.600"/></svg>
<div class="t" style="left:375.7px;top:738.1px;color:#9c9fa1;font-size:10.3px;letter-spacing:-0.817px;">TODO</div>
<svg style="left:422.5px;top:731px;" width="12" height="12" viewBox="0 0 12 12"><path d="M6 0c2 0 3 .7 3 2v2.500c0 1-.8 1.500-1.800 1.500H4.800C3.500 6 3 7 3 8v1H1.800C.6 9 0 7.800 0 6.300S.7 3.500 2 3.500h4V3H3V2c0-1.300 1-2 3-2z M9.500 3.500h.8c1.200 0 1.700 1.200 1.700 2.700s-.7 2.800-2 2.800H6v.5h3v1c0 1.300-1 2-3 2s-3-.7-3-2V8.500c0-1 .8-1.500 1.800-1.500h2.400C8.500 7 9.500 6 9.500 5z" fill="#b4b7b9"/></svg>
<div class="t" style="left:438.7px;top:738.1px;color:#9c9fa1;font-size:10.3px;letter-spacing:-0.430px;">Python Console</div>
<svg style="left:527.5px;top:731.5px;" width="11" height="11" viewBox="0 0 11 11"><circle cx="5.500" cy="5.500" r="5.500" fill="#b4b7b9"/><path d="M5.500 2.500v3.800" stroke="#3c3f41" stroke-width="1.500"/><circle cx="5.500" cy="8.300" r=".9" fill="#3c3f41"/></svg>
<div class="t" style="left:542.6px;top:738.1px;color:#9c9fa1;font-size:10.3px;letter-spacing:-0.288px;">Problems</div>
<svg style="left:604px;top:731.5px;" width="12" height="11" viewBox="0 0 12 11"><rect x="0" y="0" width="12" height="11" rx="1" fill="#b4b7b9"/><path d="M2 3l2.500 2.200L2 7.500M6 8h3.500" stroke="#3c3f41" stroke-width="1.200" fill="none"/></svg>
<div class="t" style="left:619.4px;top:738.1px;color:#9c9fa1;font-size:10.3px;letter-spacing:-0.165px;">Terminal</div>
<svg style="left:676px;top:731px;" width="12" height="12" viewBox="0 0 12 12"><path d="M0 1.500l6-1.500v12l-6-1.500z" fill="#b4b7b9"/><path d="M7 2h5v8H7M7 4.700h5M7 7.300h5M9.500 2v8" fill="none" stroke="#b4b7b9" stroke-width="1"/></svg>
<div class="t" style="left:691.8px;top:738.1px;color:#9c9fa1;font-size:10.3px;letter-spacing:-0.579px;">ExcelReader</div>
<svg style="left:765.5px;top:731.5px;" width="11" height="11" viewBox="0 0 11 11"><circle cx="5.500" cy="5.500" r="5.500" fill="#b4b7b9"/><path d="M4 3l4 2.500-4 2.500z" fill="#3c3f41"/></svg>
<div class="t" style="left:781.9px;top:738.1px;color:#9c9fa1;font-size:10.3px;letter-spacing:-0.587px;">Services</div>
<svg style="left:5px;top:749px;" width="12" height="12" viewBox="0 0 12 12"><rect x=".7" y=".7" width="10" height="10" rx="1" fill="none" stroke="#9a9da0" stroke-width="1.300"/><path d="M.7 8.500h10" stroke="#9a9da0" stroke-width="1.300"/></svg>
<div class="t" style="left:25.5px;top:756.2px;color:#bdbfc1;font-size:11.3px;letter-spacing:0.149px;">Hide active tool window</div>
<div class="t" style="left:1124px;top:756.2px;color:#a9acae;font-size:11.3px;letter-spacing:-0.403px;">1:3</div>
<div class="t" style="left:1147.4px;top:756.2px;color:#a9acae;font-size:11.3px;letter-spacing:-1.277px;">CRLF</div>
<div class="t" style="left:1184px;top:756.2px;color:#a9acae;font-size:11.3px;letter-spacing:-0.603px;">UTF-8</div>
<div class="t" style="left:1224.3px;top:756.2px;color:#a9acae;font-size:11.3px;letter-spacing:-0.404px;">4 spaces</div>
<div class="t" style="left:1303.8px;top:756.2px;color:#a9acae;font-size:11.3px;letter-spacing:-0.179px;">Python 3.10 (invoice)</div>
<svg style="left:1277px;top:748.5px;" width="15" height="14" viewBox="0 0 15 14"><path d="M3 5c0-3 2-4 4.500-4S12 2 12 5c2 1 2.500 2.500 2 4.500-1 3-3.500 4-6.500 4S2 12.500 1 9.500C.5 7.500 1 6 3 5z" fill="#c9ccce"/><rect x="3.700" y="3.200" width="2.800" height="3.600" rx="1.100" fill="#3c3f41"/><rect x="8.500" y="3.200" width="2.800" height="3.600" rx="1.100" fill="#3c3f41"/><path d="M3.700 8.800h7.600v2.300c-2 1.200-5.600 1.200-7.600 0z" fill="#3c3f41"/><path d="M6 9.500v1.400M9 9.500v1.400" stroke="#c9ccce" stroke-width="1"/></svg>
<svg style="left:1416px;top:749px;" width="12" height="12" viewBox="0 0 12 12"><rect x="3.500" y="5.500" width="8" height="6" rx=".8" fill="#b4b7b9"/><path d="M1 5.500V3.500a2.300 2.300 0 0 1 4.600 0v2" fill="none" stroke="#b4b7b9" stroke-width="1.300"/></svg>
<svg style="left:20px;top:777px;" width="20" height="20" viewBox="0 0 20 20"><defs><radialGradient id="sun" cx=".4" cy=".35" r=".7"><stop offset="0" stop-color="#ffb02e"/><stop offset="1" stop-color="#f47a12"/></radialGradient></defs><circle cx="10" cy="10" r="9.800" fill="url(#sun)"/></svg>
<div class="t" style="left:48.7px;top:780px;color:#2b2b2b;font-size:11px;letter-spacing:-0.695px;">19°C</div>
<div class="t" style="left:49px;top:795px;color:#3a3a3a;font-size:10px;">晴れ</div>
<svg style="left:439.0px;top:775.0px;" width="24" height="24" viewBox="0 0 24 24"><defs><linearGradient id="wg" x1="0" y1="0" x2="1" y2="1"><stop offset="0" stop-color="#4fc0f7"/><stop offset="1" stop-color="#0d74d1"/></linearGradient></defs><path d="M1.500 1.500h10v10h-10zM12.500 1.500h10v10h-10zM1.500 12.500h10v10h-10zM12.500 12.500h10v10h-10z" fill="url(#wg)"/></svg>
<svg style="left:481.0px;top:775.0px;" width="24" height="24" viewBox="0 0 24 24"><circle cx="13.500" cy="10" r="6.800" fill="none" stroke="#1b1b1b" stroke-width="2.600"/><path d="M8.500 15.500L3 21.500" stroke="#1b1b1b" stroke-width="3" stroke-linecap="round"/></svg>
<svg style="left:520.5px;top:775.0px;" width="24" height="24" viewBox="0 0 24 24"><rect x="9" y="2.500" width="13" height="13" rx="1.500" fill="#f4f4f4" stroke="#d9d9d9" stroke-width=".6"/><rect x="2.500" y="7.500" width="14" height="14" rx="1.500" fill="#2b2b2b"/><rect x="9" y="7.500" width="7.500" height="8" fill="#b9b9b9"/></svg>
<svg style="left:562.5px;top:775.0px;" width="24" height="24" viewBox="0 0 24 24"><path d="M12 1.500c6 0 10.500 4 10.500 9.500S18 20.500 12 20.500c-1.500 0-3-.3-4.300-.8L2 22.500l1.800-5C2.300 15.800 1.500 13.500 1.500 11 1.500 5.500 6 1.500 12 1.500z" fill="#5b5fc7"/><path d="M12 3.500c5 0 8.500 3.300 8.500 7.500s-3.500 7.500-8.500 7.500S3.500 15.200 3.500 11 7 3.500 12 3.500z" fill="#7b83eb"/><rect x="6.500" y="7.500" width="8" height="7" rx="1.500" fill="#fff"/><path d="M15 10.200l3.500-2.200v6l-3.500-2.200z" fill="#fff"/></svg>
<svg style="left:605.0px;top:775.0px;" width="24" height="24" viewBox="0 0 24 24"><path d="M1.500 4.500c0-1 .7-1.500 1.500-1.500h6l2.500 2.500H21c.8 0 1.500.7 1.500 1.500V19c0 .8-.7 1.500-1.500 1.500H3c-.8 0-1.500-.7-1.500-1.500z" fill="#f5b716"/><path d="M1.500 8.500h21V19c0 .8-.7 1.500-1.500 1.500H3c-.8 0-1.500-.7-1.500-1.500z" fill="#fbd34c"/><rect x="6" y="15" width="12" height="5.500" fill="#1e7ed6"/></svg>
<svg style="left:645.5px;top:775.0px;" width="24" height="24" viewBox="0 0 24 24"><defs><linearGradient id="eg" x1="0" y1="0" x2="1" y2="1"><stop offset="0" stop-color="#35c1a5"/><stop offset=".5" stop-color="#1e98d7"/><stop offset="1" stop-color="#0c59a4"/></linearGradient></defs><circle cx="12" cy="12" r="10.800" fill="url(#eg)"/><path d="M6.500 15.500c-.5-4 2.500-7.500 6.500-7.500 3.500 0 6 2 6 4.500 0 2-1.700 3-3.500 3-1.300 0-2-.5-2-1.300 0-1 .8-1.200.8-2.200 0-1-1-1.800-2.300-1.800-2.200 0-3.500 2-3.500 4.300 0 .4 0 .7.100 1z" fill="#fff" opacity=".93"/><path d="M2 14c2 5 6.500 8.500 11.500 8.500 3 0 5.500-1 7-2.500-4 1.500-9.500.5-11.500-4.500z" fill="#1561b5"/></svg>
<svg style="left:687.0px;top:775.0px;" width="24" height="24" viewBox="0 0 24 24"><rect x="3" y="2.500" width="18" height="20" rx="2" fill="#f7f7f7" stroke="#5a5a5a" stroke-width="1.200"/><path d="M6 1v4M10 1v4M14 1v4M18 1v4" stroke="#4a4a4a" stroke-width="1.300"/><rect x="4.500" y="7" width="5" height="5" fill="#e53fbf"/><rect x="13" y="14.500" width="6" height="5.500" fill="#39cde8"/><path d="M11 8h8M11 11h8M5 15h6M5 18h6" stroke="#d6d6d6" stroke-width="1.200"/></svg>
<svg style="left:727.5px;top:775.0px;" width="24" height="24" viewBox="0 0 24 24"><circle cx="12" cy="12" r="10.800" fill="#e33b2e"/><path d="M12 12L2.700 6.700A10.800 10.800 0 0 0 6.600 21.400z" fill="#2ba24c"/><path d="M12 12l-5.400 9.400A10.800 10.800 0 0 0 22.800 12z" fill="#fcc31e"/><path d="M12 12h10.800a10.800 10.800 0 0 0-1.500-5.400z" fill="#e33b2e"/><circle cx="12" cy="12" r="5" fill="#fff"/><circle cx="12" cy="12" r="3.900" fill="#2f7de1"/></svg>
<svg style="left:769.5px;top:775.0px;" width="24" height="24" viewBox="0 0 24 24"><rect x="1.500" y="3" width="21" height="18" rx="5.500" fill="#3e8ef7"/><rect x="5.500" y="8" width="8.500" height="8" rx="1.800" fill="#fff"/><path d="M14.700 11l4-2.500v7l-4-2.500z" fill="#fff"/></svg>
<svg style="left:810.5px;top:775.0px;" width="24" height="24" viewBox="0 0 24 24"><circle cx="12" cy="12" r="11" fill="#f7f5f3"/><rect x="9" y="4" width="2.800" height="7" rx="1.400" fill="#36c5f0"/><rect x="4" y="9" width="7" height="2.800" rx="1.400" fill="#36c5f0"/><rect x="12.700" y="4" width="2.800" height="7" rx="1.400" fill="#2eb67d"/><rect x="13" y="9" width="7" height="2.800" rx="1.400" fill="#2eb67d"/><rect x="12.700" y="13" width="2.800" height="7" rx="1.400" fill="#ecb22e"/><rect x="13" y="12.700" width="7" height="2.800" rx="1.400" fill="#ecb22e"/><rect x="9" y="13" width="2.800" height="7" rx="1.400" fill="#e01e5a"/><rect x="4" y="12.700" width="7" height="2.800" rx="1.400" fill="#e01e5a"/></svg>
<svg style="left:852.0px;top:775.0px;" width="24" height="24" viewBox="0 0 24 24"><circle cx="12" cy="12" r="11" fill="#5865f2"/><path d="M6 8c1.500-1 3-1.300 4-1.300l.4.800c1-.1 2.200-.1 3.200 0l.4-.8c1 0 2.500.3 4 1.300 1.300 2.500 2 5.300 1.700 8-1.200 1-2.600 1.500-4 1.700l-.8-1.400c-1.800.5-4 .5-5.800 0l-.8 1.400c-1.400-.2-2.800-.7-4-1.700C4 13.300 4.700 10.500 6 8z" fill="#fff"/><ellipse cx="9.500" cy="12.500" rx="1.500" ry="1.800" fill="#5865f2"/><ellipse cx="14.500" cy="12.500" rx="1.500" ry="1.800" fill="#5865f2"/></svg>
<div class="a" style="left:887px;top:768px;width:36px;height:39px;background:rgba(255,255,255,.55);border-radius:4px;"></div>
<svg style="left:893.0px;top:775.0px;" width="24" height="24" viewBox="0 0 24 24"><defs><linearGradient id="pcg" x1="0" y1="0" x2="1" y2="1"><stop offset="0" stop-color="#21d789"/><stop offset=".55" stop-color="#d9e63a"/><stop offset="1" stop-color="#fcf84a"/></linearGradient></defs><rect x="1" y="1" width="22" height="22" rx="1.500" fill="url(#pcg)"/><rect x="4" y="4" width="16" height="16" fill="#0a0a0a"/><path d="M6 6.500h3c1.300 0 2 .8 2 1.800s-.8 1.800-2 1.800H7.300v1.700H6zM15.500 6.400c1 0 1.800.4 2.300 1l-.9.900c-.4-.4-.8-.7-1.400-.7-.9 0-1.500.7-1.500 1.600s.6 1.600 1.500 1.600c.6 0 1-.300 1.400-.700l.9.900c-.5.600-1.300 1-2.400 1-1.600 0-2.800-1.200-2.800-2.800s1.200-2.800 2.900-2.800z" fill="#fff"/><path d="M6 17h6" stroke="#fff" stroke-width="1.300"/></svg>
<div class="a" style="left:898px;top:803px;width:14px;height:2.5px;background:#0a6cc9;border-radius:1.500px;"></div>
<svg style="left:934.5px;top:775.0px;" width="24" height="24" viewBox="0 0 24 24"><circle cx="12" cy="12" r="10.800" fill="#e33b2e"/><path d="M12 12L2.700 6.700A10.800 10.800 0 0 0 6.600 21.400z" fill="#2ba24c"/><path d="M12 12l-5.400 9.400A10.800 10.800 0 0 0 22.800 12z" fill="#fcc31e"/><path d="M12 12h10.800a10.800 10.800 0 0 0-1.500-5.400z" fill="#e33b2e"/><circle cx="12" cy="12" r="5" fill="#fff"/><circle cx="12" cy="12" r="3.900" fill="#2f7de1"/></svg>
<svg style="left:975.0px;top:775.0px;" width="24" height="24" viewBox="0 0 24 24"><rect x="7" y="2" width="15" height="20" rx="1.500" fill="#21a366"/><rect x="14.500" y="2" width="7.500" height="6.700" fill="#33c481"/><rect x="14.500" y="8.700" width="7.500" height="6.700" fill="#107c41"/><rect x="7" y="15.400" width="15" height="6.600" fill="#185c37"/><rect x="1.500" y="6" width="12" height="12" rx="1.200" fill="#107c41"/><path d="M5 9l5 6M10 9l-5 6" stroke="#fff" stroke-width="1.700"/></svg>
<div class="a" style="left:614px;top:803.5px;width:6px;height:2px;background:#7d8286;border-radius:1px;"></div>
<div class="a" style="left:654.5px;top:803.5px;width:6px;height:2px;background:#7d8286;border-radius:1px;"></div>
<div class="a" style="left:943.5px;top:803.5px;width:6px;height:2px;background:#7d8286;border-radius:1px;"></div>
<div class="a" style="left:984px;top:803.5px;width:6px;height:2px;background:#7d8286;border-radius:1px;"></div>
<svg style="left:1137px;top:783px;" width="13" height="8" viewBox="0 0 13 8"><path d="M1 7l5.500-5.500L12 7" stroke="#262626" stroke-width="1.400" fill="none"/></svg>
<svg style="left:1157px;top:779px;" width="18" height="15" viewBox="0 0 18 15"><path d="M4.500 12.500h9a3 3 0 0 0 .5-6 4.500 4.500 0 0 0-8.500-1 3.600 3.600 0 0 0-1 7z" fill="none" stroke="#262626" stroke-width="1.400"/><path d="M2 1l14 13" stroke="#262626" stroke-width="1.400"/></svg>
<svg style="left:1180px;top:778px;" width="17" height="18" viewBox="0 0 17 18"><path d="M2.500 8A6 6 0 0 1 13 4.500M14.500 10A6 6 0 0 1 4 13.500" fill="none" stroke="#262626" stroke-width="1.400"/><path d="M13.500 1v4h-4zM3.500 17v-4h4z" fill="#262626"/><circle cx="12.500" cy="13.500" r="3.300" fill="#1a73d9"/></svg>
<svg style="left:1208px;top:777px;" width="13" height="20" viewBox="0 0 13 20"><rect x="4" y="1" width="5" height="10.500" rx="2.500" fill="#2f7fd6" stroke="#1f62b3" stroke-width=".8"/><path d="M1.500 9a5 5 0 0 0 10 0M6.500 14v4" fill="none" stroke="#1f62b3" stroke-width="1.400"/></svg>
<div class="t" style="left:1237.5px;top:787px;color:#262626;font-size:19px;font-weight:normal;">A</div>
<svg style="left:1265.5px;top:779px;" width="18" height="14" viewBox="0 0 18 14"><path d="M1 5.500a11.500 11.500 0 0 1 16 0M3.500 8.200a8 8 0 0 1 11 0M6 10.800a4.300 4.300 0 0 1 6 0" fill="none" stroke="#262626" stroke-width="1.400"/><circle cx="9" cy="12.800" r="1.200" fill="#262626"/></svg>
<svg style="left:1289px;top:780px;" width="16" height="14" viewBox="0 0 16 14"><path d="M1 5h3l4-3.500v11L4 9H1z" fill="none" stroke="#262626" stroke-width="1.200"/><path d="M10 4.500a3.500 3.500 0 0 1 0 5" fill="none" stroke="#262626" stroke-width="1.100"/><path d="M12 2.500a6.500 6.500 0 0 1 0 9" fill="none" stroke="#9aa7b0" stroke-width="1"/></svg>
<svg style="left:1311px;top:781px;" width="17" height="12" viewBox="0 0 17 12"><rect x="3" y="3" width="11.500" height="7.500" rx="1.800" fill="#262626"/><rect x="14.500" y="5.200" width="2" height="3" rx=".8" fill="#262626"/><circle cx="3.500" cy="3.500" r="2.600" fill="#262626"/></svg>
<div class="t" style="left:1318px;width:80px;text-align:right;top:780px;color:#2b2b2b;font-size:10.800px">11:28</div>
<div class="t" style="left:1318px;width:80px;text-align:right;top:795px;color:#2b2b2b;font-size:11.300px">2022/10/29</div>
<svg style="left:1405.5px;top:780px;" width="15" height="15" viewBox="0 0 15 15"><circle cx="7.500" cy="7.500" r="7.500" fill="#0a78d4"/></svg>
<div class="t" style="left:1410.5px;top:787.5px;color:#fff;font-size:10.5px;">2</div>
  <div class="a" style="left:892.5px;top:37.5px;width:444.5px;height:549px;background:#3d4143;border:1px solid #54585a;border-radius:7px;box-shadow:0 10px 38px 8px rgba(0,0,0,.36),0 2px 8px rgba(0,0,0,.25);"></div>
<svg style="left:904.5px;top:43.5px;" width="14.5" height="14.5" viewBox="0 0 15 15"><rect x=".8" y=".8" width="13.400" height="13.400" rx="1.200" fill="#0b0f0c" stroke="#cfe334" stroke-width="1.600"/><path d="M3.200 3.400h3.600v3.200H4.600v1.200H3.200z M7.600 3.400h3v1.200h-3z" fill="#e9f0ea"/><path d="M8 6l3.500 1.800L8.500 12H4z" fill="#1f2a22"/></svg>
<div class="t" style="left:930.8px;top:52px;color:#cfd1d3;font-size:11.3px;letter-spacing:-0.322px;">Evaluate</div>
<svg style="left:1310.5px;top:46.5px;" width="9" height="9" viewBox="0 0 9 9"><path d="M0 0l9 9M9 0l-9 9" stroke="#c3c6c8" stroke-width="1"/></svg>
<div class="t" style="left:904.4px;top:79.5px;color:#c3c6c8;font-size:11px;letter-spacing:-0.425px;">Expression:</div>
<div class="a" style="left:905.5px;top:91.5px;width:419.5px;height:29px;background:#45494a;border:2.500px solid #416c9b;border-radius:4px;"></div>
<div class="t mono" style="left:912px;top:106.8px;color:#dfe1e3;font-size:16.6px;letter-spacing:-.3px;">wb</div>
<div class="a" style="left:933px;top:95px;width:1.3px;height:22px;background:#e8eaec;"></div>
<div class="a" style="left:1302px;top:94px;width:1px;height:24px;background:#5b6670;"></div>
<svg style="left:1280px;top:100px;" width="12" height="12" viewBox="0 0 12 12"><path d="M1 11L11 1M7 1h4v4M1 7v4h4" stroke="#5d6264" stroke-width="1" fill="none"/></svg>
<svg style="left:1308px;top:104px;" width="9" height="6" viewBox="0 0 9 6"><path d="M0 .5h9L4.500 5.500z" fill="#c3c6c8"/></svg>
<svg style="left:899.5px;top:87.5px;" width="9" height="13" viewBox="0 0 9 13"><circle cx="4.500" cy="4.500" r="4.500" fill="#f2a52e"/><rect x="2.800" y="8.500" width="3.400" height="2.500" fill="#6f8fae"/></svg>
<div class="t" style="left:1025px;width:300px;text-align:right;top:131.5px;color:#73777a;font-size:9.850px">Use Ctrl+Shift+Enter to add to Watches</div>
<div class="t" style="left:904.4px;top:153px;color:#c3c6c8;font-size:11px;letter-spacing:-0.377px;">Result:</div>
<div class="a" style="left:905px;top:159px;width:420px;height:384px;overflow:hidden;border-bottom:1px solid #35383a"><div class="a" style="left:0;top:0;width:420px;height:19px;background:#0d293e"></div>
<svg style="left:6.5px;top:7.5px" width="10" height="6" viewBox="0 0 10 6"><path d="M1 1l4 4 4-4" fill="none" stroke="#c9ccce" stroke-width="1.400"/></svg>
<svg style="left:25px;top:5.5px" width="10" height="10" viewBox="0 0 10 10"><path d="M0 1.200h10M0 5h10M0 8.800h10" stroke="#d9a343" stroke-width="2"/></svg>
<div class="t" style="left:40.5px;top:10.5px;font-size:11.2px;"><span style="color:#dd6b6b">result</span><span style="color:#84888a"> = {Workbook} </span><span style="color:#cfd1d3">&lt;openpyxl.workbook.workbook.Workbook object at 0x00000215BCBAEDA0&gt;</span></div>
<svg style="left:25px;top:24.29px" width="6" height="10" viewBox="0 0 6 10"><path d="M1 1l4 4-4 4" fill="none" stroke="#a9acae" stroke-width="1.400"/></svg>
<svg style="left:42px;top:24.29px" width="10" height="10" viewBox="0 0 10 10"><path d="M0 1.200h10M0 5h10M0 8.800h10" stroke="#d9a343" stroke-width="2"/></svg>
<div class="t" style="left:57px;top:29.29px;font-size:11.2px;"><span style="color:#dd6b6b">active</span><span style="color:#84888a"> = {Worksheet} </span><span style="color:#cfd1d3">&lt;Worksheet "<span class="cj" style="width:56px">取引先一覧</span><span class="cj" style="width:66px;font-size:9.400px;letter-spacing:0">（インボイス）</span>"&gt;</span></div>
<svg style="left:25px;top:43.08px" width="6" height="10" viewBox="0 0 6 10"><path d="M1 1l4 4-4 4" fill="none" stroke="#a9acae" stroke-width="1.400"/></svg>
<svg style="left:42px;top:43.08px" width="10" height="10" viewBox="0 0 10 10"><path d="M0 1.200h10M0 5h10M0 8.800h10" stroke="#d9a343" stroke-width="2"/></svg>
<div class="t" style="left:57px;top:48.08px;width:329px;overflow:hidden;font-size:11.2px;letter-spacing:-0.024px;"><span style="color:#dd6b6b">calculation</span><span style="color:#84888a"> = {CalcProperties} </span><span style="color:#cfd1d3">&lt;openpyxl.workbook.properties.Calc</span></div>
<div class="t" style="left:388.500px;top:48.08px;font-size:11.2px;color:#6d7173"><span style="font-size:8px;letter-spacing:.5px">...</span> <span style="color:#4d78ad">View</span></div>
<svg style="left:25px;top:61.870000000000005px" width="6" height="10" viewBox="0 0 6 10"><path d="M1 1l4 4-4 4" fill="none" stroke="#a9acae" stroke-width="1.400"/></svg>
<svg style="left:41px;top:61.370000000000005px" width="12" height="11" viewBox="0 0 12 11"><path d="M4 1.500h8M4 5.500h8M4 9.500h8" stroke="#3fa0dc" stroke-width="1.700"/><path d="M1 0v11" stroke="#d0d2d4" stroke-width="1.300" stroke-dasharray="2 1.500"/></svg>
<div class="t" style="left:57px;top:66.87px;font-size:11.2px;letter-spacing:-0.058px;"><span style="color:#dd6b6b">chartsheets</span><span style="color:#84888a"> = {list: 0} </span><span style="color:#cfd1d3">[]</span></div>
<svg style="left:41.5px;top:80.16px" width="11.500" height="11" viewBox="0 0 11.500 11"><rect x="0" y="0" width="11.500" height="11" rx="1.200" fill="#3b9fd9"/><text x="5.750" y="8" font-size="6.500" font-family="Liberation Sans" fill="#214a63" text-anchor="middle" font-weight="bold">01</text></svg>
<div class="t" style="left:57px;top:85.66px;font-size:11.2px;letter-spacing:-0.016px;"><span style="color:#dd6b6b">code_name</span><span style="color:#84888a"> = {NoneType} </span><span style="color:#cfd1d3">None</span></div>
<svg style="left:41.5px;top:98.94999999999999px" width="11.500" height="11" viewBox="0 0 11.500 11"><rect x="0" y="0" width="11.500" height="11" rx="1.200" fill="#3b9fd9"/><text x="5.750" y="8" font-size="6.500" font-family="Liberation Sans" fill="#214a63" text-anchor="middle" font-weight="bold">01</text></svg>
<div class="t" style="left:57px;top:104.44999999999999px;font-size:11.2px;letter-spacing:-0.004px;"><span style="color:#dd6b6b">data_only</span><span style="color:#84888a"> = {bool} </span><span style="color:#cfd1d3">False</span></div>
<svg style="left:25px;top:118.24px" width="6" height="10" viewBox="0 0 6 10"><path d="M1 1l4 4-4 4" fill="none" stroke="#a9acae" stroke-width="1.400"/></svg>
<svg style="left:42px;top:118.24px" width="10" height="10" viewBox="0 0 10 10"><path d="M0 1.200h10M0 5h10M0 8.800h10" stroke="#d9a343" stroke-width="2"/></svg>
<div class="t" style="left:57px;top:123.24px;font-size:11.2px;"><span style="color:#dd6b6b">defined_names</span><span style="color:#84888a"> = {DefinedNameList: 0} </span><span style="color:#cfd1d3">&lt;openpyxl.workbook.defined_name.DefinedNameList</span></div>
<svg style="left:41.5px;top:136.53px" width="11.500" height="11" viewBox="0 0 11.500 11"><rect x="0" y="0" width="11.500" height="11" rx="1.200" fill="#3b9fd9"/><text x="5.750" y="8" font-size="6.500" font-family="Liberation Sans" fill="#214a63" text-anchor="middle" font-weight="bold">01</text></svg>
<div class="t" style="left:57px;top:142.03px;font-size:11.2px;letter-spacing:0.148px;"><span style="color:#dd6b6b">encoding</span><span style="color:#84888a"> = {str} </span><span style="color:#cfd1d3">'utf-8'</span></div>
<svg style="left:25px;top:155.82px" width="6" height="10" viewBox="0 0 6 10"><path d="M1 1l4 4-4 4" fill="none" stroke="#a9acae" stroke-width="1.400"/></svg>
<svg style="left:42px;top:155.82px" width="10" height="10" viewBox="0 0 10 10"><path d="M0 1.200h10M0 5h10M0 8.800h10" stroke="#d9a343" stroke-width="2"/></svg>
<div class="t" style="left:57px;top:160.82px;font-size:11.2px;letter-spacing:-0.009px;"><span style="color:#dd6b6b">epoch</span><span style="color:#84888a"> = {datetime} </span><span style="color:#cfd1d3">1899-12-30 00:00:00</span></div>
<svg style="left:25px;top:174.60999999999999px" width="6" height="10" viewBox="0 0 6 10"><path d="M1 1l4 4-4 4" fill="none" stroke="#a9acae" stroke-width="1.400"/></svg>
<svg style="left:42px;top:174.60999999999999px" width="10" height="10" viewBox="0 0 10 10"><path d="M0 1.200h10M0 5h10M0 8.800h10" stroke="#d9a343" stroke-width="2"/></svg>
<div class="t" style="left:57px;top:179.60999999999999px;font-size:11.2px;letter-spacing:-0.098px;"><span style="color:#dd6b6b">excel_base_date</span><span style="color:#84888a"> = {datetime} </span><span style="color:#cfd1d3">1899-12-30 00:00:00</span></div>
<svg style="left:41.5px;top:192.89999999999998px" width="11.500" height="11" viewBox="0 0 11.500 11"><rect x="0" y="0" width="11.500" height="11" rx="1.200" fill="#3b9fd9"/><text x="5.750" y="8" font-size="6.500" font-family="Liberation Sans" fill="#214a63" text-anchor="middle" font-weight="bold">01</text></svg>
<div class="t" style="left:57px;top:198.39999999999998px;font-size:11.2px;letter-spacing:-0.015px;"><span style="color:#dd6b6b">is_template</span><span style="color:#84888a"> = {bool} </span><span style="color:#cfd1d3">False</span></div>
<svg style="left:41.5px;top:211.69px" width="11.500" height="11" viewBox="0 0 11.500 11"><rect x="0" y="0" width="11.500" height="11" rx="1.200" fill="#3b9fd9"/><text x="5.750" y="8" font-size="6.500" font-family="Liberation Sans" fill="#214a63" text-anchor="middle" font-weight="bold">01</text></svg>
<div class="t" style="left:57px;top:217.19px;font-size:11.2px;letter-spacing:-0.103px;"><span style="color:#dd6b6b">iso_dates</span><span style="color:#84888a"> = {bool} </span><span style="color:#cfd1d3">False</span></div>
<svg style="left:25px;top:230.98px" width="6" height="10" viewBox="0 0 6 10"><path d="M1 1l4 4-4 4" fill="none" stroke="#a9acae" stroke-width="1.400"/></svg>
<svg style="left:42px;top:230.98px" width="10" height="10" viewBox="0 0 10 10"><path d="M0 1.200h10M0 5h10M0 8.800h10" stroke="#d9a343" stroke-width="2"/></svg>
<div class="t" style="left:57px;top:235.98px;width:329px;overflow:hidden;font-size:11.2px;letter-spacing:0.033px;"><span style="color:#dd6b6b">loaded_theme</span><span style="color:#84888a"> = {bytes: 6784} </span><span style="color:#cfd1d3">b'&lt;?xml version="1.0" encoding="U</span></div>
<div class="t" style="left:388.500px;top:235.98px;font-size:11.2px;color:#6d7173"><span style="font-size:8px;letter-spacing:.5px">...</span> <span style="color:#4d78ad">View</span></div>
<svg style="left:41.5px;top:249.26999999999998px" width="11.500" height="11" viewBox="0 0 11.500 11"><rect x="0" y="0" width="11.500" height="11" rx="1.200" fill="#3b9fd9"/><text x="5.750" y="8" font-size="6.500" font-family="Liberation Sans" fill="#214a63" text-anchor="middle" font-weight="bold">01</text></svg>
<div class="t" style="left:57px;top:254.76999999999998px;width:329px;overflow:hidden;font-size:11.2px;letter-spacing:0.139px;"><span style="color:#dd6b6b">mime_type</span><span style="color:#84888a"> = {str} </span><span style="color:#cfd1d3">'application/vnd.openxmlformats-officedocume</span></div>
<div class="t" style="left:388.500px;top:254.76999999999998px;font-size:11.2px;color:#6d7173"><span style="font-size:8px;letter-spacing:.5px">...</span> <span style="color:#4d78ad">View</span></div>
<svg style="left:25px;top:268.56px" width="6" height="10" viewBox="0 0 6 10"><path d="M1 1l4 4-4 4" fill="none" stroke="#a9acae" stroke-width="1.400"/></svg>
<svg style="left:41px;top:268.06px" width="12" height="11" viewBox="0 0 12 11"><path d="M4 1.500h8M4 5.500h8M4 9.500h8" stroke="#3fa0dc" stroke-width="1.700"/><path d="M1 0v11" stroke="#d0d2d4" stroke-width="1.300" stroke-dasharray="2 1.500"/></svg>
<div class="t" style="left:57px;top:273.56px;font-size:11.2px;"><span style="color:#dd6b6b">named_styles</span><span style="color:#84888a"> = {list: 1} </span><span style="color:#cfd1d3">['<span class="cj" style="width:23px">標準</span>']</span></div>
<svg style="left:41.5px;top:286.84999999999997px" width="11.500" height="11" viewBox="0 0 11.500 11"><rect x="0" y="0" width="11.500" height="11" rx="1.200" fill="#3b9fd9"/><text x="5.750" y="8" font-size="6.500" font-family="Liberation Sans" fill="#214a63" text-anchor="middle" font-weight="bold">01</text></svg>
<div class="t" style="left:57px;top:292.34999999999997px;font-size:11.2px;letter-spacing:0.192px;"><span style="color:#dd6b6b">path</span><span style="color:#84888a"> = {str} </span><span style="color:#cfd1d3">'/xl/workbook.xml'</span></div>
<svg style="left:25px;top:306.14px" width="6" height="10" viewBox="0 0 6 10"><path d="M1 1l4 4-4 4" fill="none" stroke="#a9acae" stroke-width="1.400"/></svg>
<svg style="left:42px;top:306.14px" width="10" height="10" viewBox="0 0 10 10"><path d="M0 1.200h10M0 5h10M0 8.800h10" stroke="#d9a343" stroke-width="2"/></svg>
<div class="t" style="left:57px;top:311.14px;width:329px;overflow:hidden;font-size:11.2px;letter-spacing:0.004px;"><span style="color:#dd6b6b">properties</span><span style="color:#84888a"> = {DocumentProperties} </span><span style="color:#cfd1d3">&lt;openpyxl.packaging.core.Doc</span></div>
<div class="t" style="left:388.500px;top:311.14px;font-size:11.2px;color:#6d7173"><span style="font-size:8px;letter-spacing:.5px">...</span> <span style="color:#4d78ad">View</span></div>
<svg style="left:41.5px;top:324.43px" width="11.500" height="11" viewBox="0 0 11.500 11"><rect x="0" y="0" width="11.500" height="11" rx="1.200" fill="#3b9fd9"/><text x="5.750" y="8" font-size="6.500" font-family="Liberation Sans" fill="#214a63" text-anchor="middle" font-weight="bold">01</text></svg>
<div class="t" style="left:57px;top:329.93px;font-size:11.2px;letter-spacing:-0.030px;"><span style="color:#dd6b6b">read_only</span><span style="color:#84888a"> = {bool} </span><span style="color:#cfd1d3">False</span></div>
<svg style="left:25px;top:343.71999999999997px" width="6" height="10" viewBox="0 0 6 10"><path d="M1 1l4 4-4 4" fill="none" stroke="#a9acae" stroke-width="1.400"/></svg>
<svg style="left:42px;top:343.71999999999997px" width="10" height="10" viewBox="0 0 10 10"><path d="M0 1.200h10M0 5h10M0 8.800h10" stroke="#d9a343" stroke-width="2"/></svg>
<div class="t" style="left:57px;top:348.71999999999997px;font-size:11.2px;"><span style="color:#dd6b6b">rels</span><span style="color:#84888a"> = {RelationshipList: 0} </span><span style="color:#cfd1d3">&lt;openpyxl.packaging.relationship.RelationshipList</span></div>
<svg style="left:41.5px;top:362.01px" width="11.500" height="11" viewBox="0 0 11.500 11"><rect x="0" y="0" width="11.500" height="11" rx="1.200" fill="#3b9fd9"/><text x="5.750" y="8" font-size="6.500" font-family="Liberation Sans" fill="#214a63" text-anchor="middle" font-weight="bold">01</text></svg>
<div class="t" style="left:57px;top:367.51px;font-size:11.2px;letter-spacing:-0.026px;"><span style="color:#dd6b6b">security</span><span style="color:#84888a"> = {NoneType} </span><span style="color:#cfd1d3">None</span></div>
<svg style="left:25px;top:381.29999999999995px" width="6" height="10" viewBox="0 0 6 10"><path d="M1 1l4 4-4 4" fill="none" stroke="#a9acae" stroke-width="1.400"/></svg>
<svg style="left:42px;top:381.29999999999995px" width="10" height="10" viewBox="0 0 10 10"><path d="M0 1.200h10M0 5h10M0 8.800h10" stroke="#d9a343" stroke-width="2"/></svg>
<div class="t" style="left:57px;top:386.29999999999995px;font-size:11.2px;"><span style="color:#dd6b6b">shared_strings</span><span style="color:#84888a"> = {IndexedList: 0} </span><span style="color:#cfd1d3">[]</span></div>
<div class="a" style="left:411px;top:0;width:7px;height:263px;background:#606466;opacity:.85"></div>
<div class="a" style="left:0;top:375px;width:73px;height:7.500px;background:#64686a;opacity:.95"></div></div>
<svg style="left:906px;top:555px;" width="22" height="22" viewBox="0 0 22 22"><circle cx="11" cy="11" r="10.300" fill="#45494b" stroke="#5e6264" stroke-width="1"/></svg>
<div class="t" style="left:913.5px;top:566.5px;color:#b4b7b9;font-size:13px;font-weight:bold;">?</div>
<div class="a" style="left:1175.5px;top:554.5px;width:69px;height:23px;background:#2f62a0;border:1px solid #4a7bb5;border-radius:3.500px;"></div>
<div class="t" style="left:1188px;top:566.5px;color:#e6e8ea;font-size:11.5px;">Evaluate</div>
<div class="a" style="left:1255.5px;top:554.5px;width:68px;height:23px;background:#4c5052;border:1px solid #616567;border-radius:3.500px;"></div>
<div class="t" style="left:1275.6px;top:566.5px;color:#c9ccce;font-size:11.5px;letter-spacing:-0.340px;">Close</div>
<div class="a" style="left:1341px;top:447px;width:104px;height:29px;background:#4b4d4d;border:1px solid #626567;"></div>
<div class="t" style="left:1352px;top:461.5px;color:#d0d2d4;font-size:11.3px;">Hide</div>
<div class="t" style="left:1381.5px;top:461.5px;color:#8f9294;font-size:11.3px;letter-spacing:-0.228px;">Shift+Esc</div>
  <div class="a" style="left:488.5px;top:687px;width:461.5px;height:38.5px;background:#f3f4f4;box-shadow:0 1px 5px rgba(0,0,0,.5);"></div>
<svg style="left:498px;top:700px;" width="4" height="13" viewBox="0 0 4 13"><path d="M.7 0v13M3.300 0v13" stroke="#c9c9c9" stroke-width="1"/></svg>
<div class="t" style="left:513px;top:706.5px;color:#2a2a2a;font-size:10.8px;"><span class="cj" style="width:75px;font-size:9.300px;letter-spacing:0">ユーザーの画面が</span></div>
<div class="t" style="left:590px;top:706.5px;color:#2a2a2a;font-size:10.8px;letter-spacing:0.010px;">meet.google.com</div>
<div class="t" style="left:677px;top:706.5px;color:#2a2a2a;font-size:10.8px;"><span class="cj" style="width:96px;font-size:9.500px;letter-spacing:0">で共有されています。</span></div>
<div class="a" style="left:782px;top:692px;width:84.5px;height:29.5px;background:#0a68c4;border-radius:1.500px;"></div>
<div class="t" style="left:796px;top:706.5px;color:#fff;font-size:10.8px;"><span class="cj" style="width:56px;font-weight:bold">共有の停止</span></div>
<div class="t" style="left:878px;top:706.5px;color:#1a62c4;font-size:10.2px;"><span class="cj" style="width:61px;text-decoration:underline">非表示にする</span></div>
</div>
<div id="tile" class="a">
  <svg style="left:178.5px;top:76px;" width="118" height="118" viewBox="0 0 118 118"><defs><clipPath id="avc"><circle cx="59.200" cy="58.700" r="58.700"/></clipPath></defs><circle cx="59.200" cy="58.700" r="58.700" fill="#2d98da"/><g clip-path="url(#avc)"><path d="M59.500 27.200L92.200 83.600H27.400z" fill="#fff"/><path d="M61.500 27L95.800 56.400V82.300L93.500 83.600z" fill="#fff"/><path d="M61.700 27.500L93.400 83" stroke="#124f86" stroke-width="1.100"/><path d="M9.900 27.600H58M7.700 30.700L54.500 37M5.400 35L50.500 45.500M3.800 39.600L45.500 54M2.500 44.100L41 62.500M1.500 48.600L36.500 70.500M1 52.500L29 82.500" stroke="#fff" stroke-width="1.700" fill="none"/><path d="M15.500 96l4-2 3.500 1v8.500l-2.500 1z" fill="#fff"/><path d="M13.800 96.500l6 8" stroke="#c9302a" stroke-width="1.300"/></g></svg>
<div class="t" style="left:12px;top:252.5px;color:#fff;font-size:17.5px;filter:none;"><span class="cj" style="width:74px;letter-spacing:0">小川慶一</span></div>
</div>
</body>
</html>
